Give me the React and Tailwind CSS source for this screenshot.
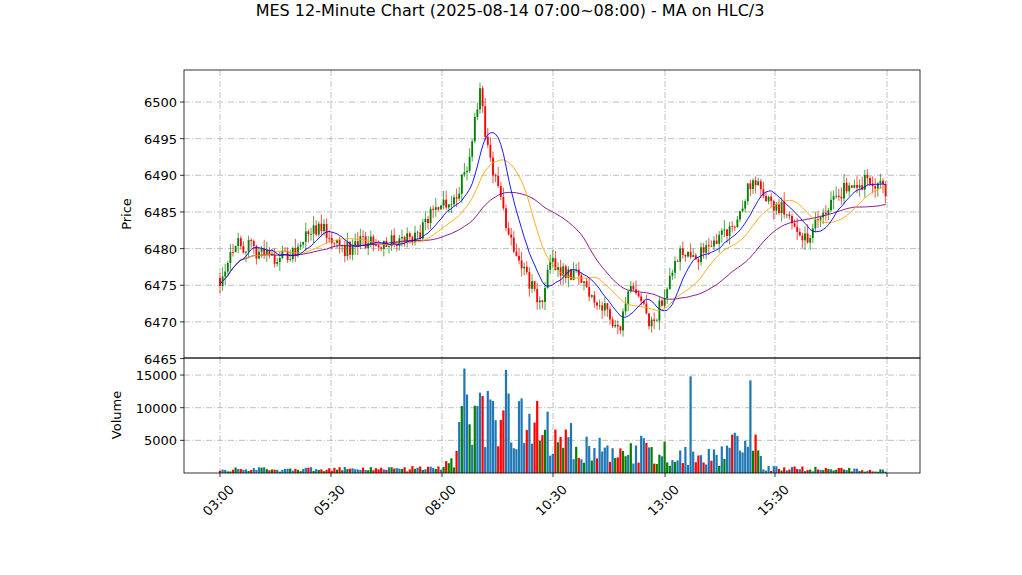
import React from 'react';

const L = 184, R = 920, PT = 69, PB = 357, VB = 472;
const py = (p) => 101 + (6500 - p) * 7.33;
const vy = (v) => VB - v * 0.00653;

function rng(seed) {
  let s = seed;
  return () => {
    s = (s * 16807) % 2147483647;
    return (s - 1) / 2147483646;
  };
}

const keys = [
  [220, 6476], [235, 6481], [250, 6480], [270, 6479], [290, 6479], [315, 6483], [330, 6482],
  [345, 6480], [370, 6481], [400, 6481], [420, 6482], [435, 6486], [455, 6487], [465, 6490],
  [475, 6497], [480, 6501], [487, 6494], [495, 6490], [505, 6484], [515, 6480], [525, 6477],
  [540, 6472], [550, 6478], [565, 6477], [580, 6476], [595, 6473], [610, 6471], [620, 6469],
  [630, 6474], [640, 6473], [650, 6469], [660, 6472], [675, 6479], [690, 6480], [700, 6479],
  [720, 6482], [735, 6483], [750, 6489], [760, 6488], [770, 6486], [790, 6485], [805, 6481],
  [820, 6484], [835, 6487], [850, 6489], [870, 6489], [887, 6488],
];

const volKeys = [
  [220, 500], [440, 700], [455, 2000], [465, 9000], [520, 8000], [560, 5000], [600, 4000],
  [640, 3500], [670, 3000], [700, 2500], [730, 3500], [755, 5000], [765, 700], [887, 400],
];

function interp(k, x) {
  for (let i = 0; i < k.length - 1; i++) {
    if (x >= k[i][0] && x <= k[i + 1][0]) {
      const t = (x - k[i][0]) / (k[i + 1][0] - k[i][0]);
      return k[i][1] + t * (k[i + 1][1] - k[i][1]);
    }
  }
  return k[k.length - 1][1];
}

function build() {
  const r = rng(42);
  const bars = [];
  const step = 2.6;
  let prev = 6476;
  const spikes = [[464, 16000], [505, 15800], [690, 14800], [751, 14200], [483, 11800], [518, 11000]];
  for (let x = 220; x <= 887; x += step) {
    const target = interp(keys, x);
    const open = prev;
    const close = target + (r() - 0.5) * 2.2;
    const hi = Math.max(open, close) + r() * 1.3;
    const lo = Math.min(open, close) - r() * 1.3;
    let vol = interp(volKeys, x) * (0.35 + r() * 1.3);
    spikes.forEach(([sx, sv]) => { if (Math.abs(x - sx) < 1.3) vol = sv; });
    bars.push({ x, open, close, hi, lo, vol, c: r() });
    prev = close;
  }
  return bars;
}

const bars = build();
const hlc = bars.map((b) => (b.hi + b.lo + b.close) / 3);
function ma(n) {
  return hlc.map((_, i) => {
    const s = hlc.slice(Math.max(0, i - n + 1), i + 1);
    return s.reduce((a, b) => a + b, 0) / s.length;
  });
}
const line = (arr) => arr.map((v, i) => `${i ? 'L' : 'M'}${bars[i].x.toFixed(1)},${py(v).toFixed(1)}`).join(' ');

const xt = [[220, '03:00'], [331, '05:30'], [442, '08:00'], [553, '10:30'], [665, '13:00'], [775, '15:30'], [887, '']];
const pt = [6500, 6495, 6490, 6485, 6480, 6475, 6470, 6465];
const vt = [15000, 10000, 5000];
const font = { fontFamily: '"DejaVu Sans", sans-serif' };

export default function App() {
  return (
    <div className="w-[1022px] h-[575px] bg-white relative" style={font}>
      <div className="text-center text-[16px] pt-[1px] pr-[2px] leading-[20px] text-black">
        MES 12-Minute Chart (2025-08-14 07:00~08:00) - MA on HLC/3
      </div>
      <svg width="1022" height="555" viewBox="0 20 1022 555" className="block">
        <g stroke="#b0b0b0" strokeWidth="0.8" strokeDasharray="6 2 1 2">
          {xt.map(([x]) => (
            <g key={x}>
              <line x1={x} y1={PT} x2={x} y2={PB} />
              <line x1={x} y1={PB} x2={x} y2={VB} />
            </g>
          ))}
          {pt.slice(0, 7).map((p) => <line key={p} x1={L} x2={R} y1={py(p)} y2={py(p)} />)}
          {vt.map((v) => <line key={v} x1={L} x2={R} y1={vy(v)} y2={vy(v)} />)}
        </g>
        {bars.map((b, i) => {
          const up = b.close >= b.open;
          const col = up ? '#008000' : '#ff0000';
          const top = py(Math.max(b.open, b.close));
          const h = Math.max(0.8, py(Math.min(b.open, b.close)) - top);
          const vcol = b.vol > 2500 && b.c < 0.6 ? '#1f77b4' : b.c < 0.35 ? '#1f77b4' : col;
          return (
            <g key={i}>
              <line x1={b.x} x2={b.x} y1={py(b.hi)} y2={py(b.lo)} stroke={col} strokeWidth="0.7" />
              <rect x={b.x - 0.9} y={top} width="1.8" height={h} fill={col} />
              <rect x={b.x - 1.1} y={vy(b.vol)} width="2.2" height={VB - vy(b.vol)} fill={vcol} />
            </g>
          );
        })}
        <path d={line(ma(42))} fill="none" stroke="#800080" strokeWidth="0.9" />
        <path d={line(ma(20))} fill="none" stroke="#ffa500" strokeWidth="0.9" />
        <path d={line(ma(10))} fill="none" stroke="#0000ff" strokeWidth="0.9" />
        <rect x={L} y={PT} width={R - L} height={PB - PT} fill="none" stroke="#000" strokeWidth="0.8" />
        <rect x={L} y={PB} width={R - L} height={VB - PB} fill="none" stroke="#000" strokeWidth="0.8" />
        <g fontSize="13" fill="#000">
          {pt.map((p) => (
            <g key={p}>
              <line x1={L - 4} x2={L} y1={py(p)} y2={py(p)} stroke="#000" strokeWidth="0.8" />
              <text x={L - 7} y={py(p) + 5} textAnchor="end">{p}</text>
            </g>
          ))}
          {vt.map((v) => (
            <g key={v}>
              <line x1={L - 4} x2={L} y1={vy(v)} y2={vy(v)} stroke="#000" strokeWidth="0.8" />
              <text x={L - 7} y={vy(v) + 5} textAnchor="end">{v}</text>
            </g>
          ))}
          {xt.map(([x, t]) => (
            <g key={x}>
              <line x1={x} x2={x} y1={VB} y2={VB + 4} stroke="#000" strokeWidth="0.8" />
              {t && <text x={x - 2} y={504} textAnchor="middle" transform={`rotate(-45 ${x - 2} 499)`}>{t}</text>}
            </g>
          ))}
          <text x={131} y={213} textAnchor="middle" transform="rotate(-90 131 213)">Price</text>
          <text x={121} y={414} textAnchor="middle" transform="rotate(-90 121 414)">Volume</text>
        </g>
      </svg>
    </div>
  );
}
